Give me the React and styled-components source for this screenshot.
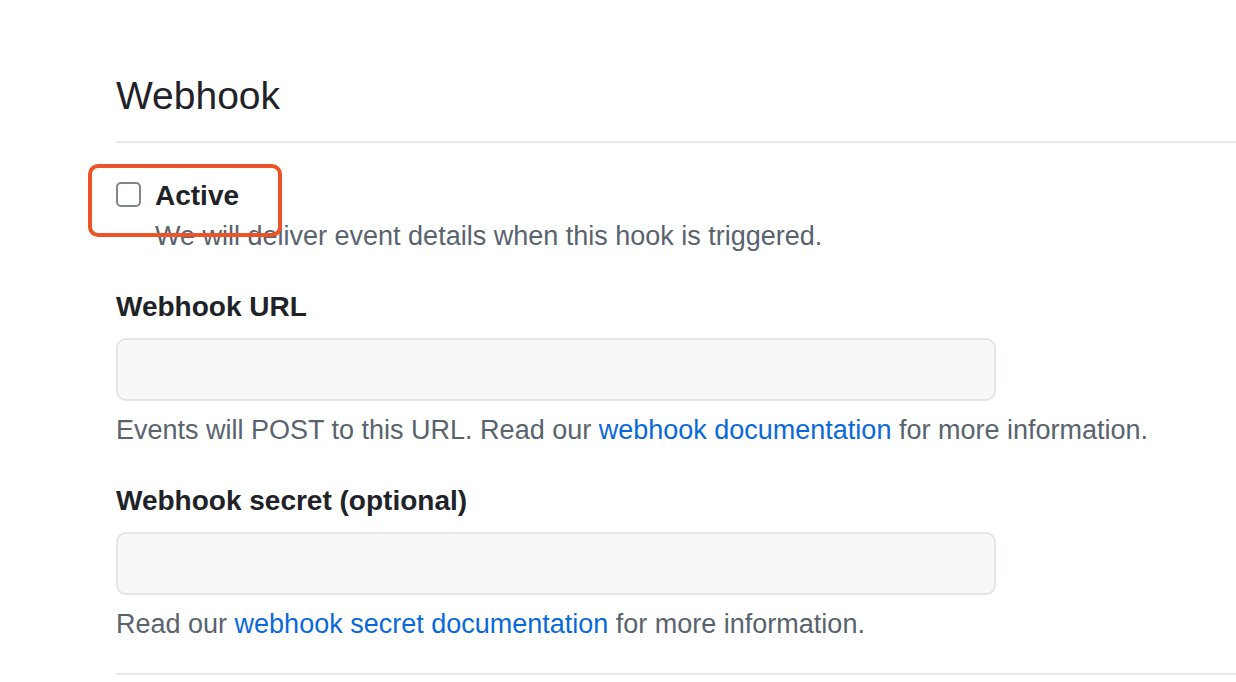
import React from 'react';
import styled, { createGlobalStyle } from 'styled-components';

const GlobalStyle = createGlobalStyle`
  body {
    margin: 0;
    background: #ffffff;
    font-family: "Liberation Sans", Arial, sans-serif;
    color: #1f2328;
  }
`;

const Page = styled.div`
  padding: 72px 0 0 116px;
`;

const Subhead = styled.div`
  padding-bottom: 21px;
  border-bottom: 2px solid #e8e9ee;
`;

const Heading = styled.h2`
  margin: 0;
  font-size: 39px;
  line-height: 48px;
  font-weight: 400;
  color: #1f2328;
`;

const CheckRow = styled.div`
  position: relative;
  display: flex;
  align-items: flex-start;
  gap: 14px;
  margin-top: 35px;
`;

const Box = styled.span`
  flex: none;
  width: 25px;
  height: 25px;
  margin-top: 4px;
  box-sizing: border-box;
  border: 2px solid #7d8590;
  border-radius: 5px;
  background: #ffffff;
`;

const CheckText = styled.div`
  display: flex;
  flex-direction: column;
  gap: 4px;
`;

const Label = styled.label`
  display: block;
  font-size: 28px;
  line-height: 36px;
  font-weight: 700;
  color: #1f2328;
`;

const Note = styled.p`
  margin: 0;
  font-size: 27px;
  line-height: 36px;
  color: #59636e;
`;

const Link = styled.a`
  color: #0969da;
  text-decoration: none;
`;

const Annotation = styled.span`
  position: absolute;
  left: -28px;
  top: -14px;
  width: 194px;
  height: 73px;
  box-sizing: border-box;
  border: 4px solid #ec5327;
  border-radius: 10px;
  pointer-events: none;
`;

const Field = styled.div`
  margin-top: ${p => p.$top}px;
  display: flex;
  flex-direction: column;
`;

const Input = styled.input`
  width: 880px;
  height: 63px;
  margin: 13px 0 11px;
  box-sizing: border-box;
  border: 2px solid #e3e5e9;
  border-radius: 10px;
  background: #f6f8fa;
  font-size: 27px;
  outline: none;
`;

const Divider = styled.hr`
  margin: 31px 0 0;
  border: 0;
  border-top: 2px solid #e8e9ee;
`;

export default function App() {
  return (
    <Page>
      <GlobalStyle />
      <Subhead>
        <Heading>Webhook</Heading>
      </Subhead>
      <CheckRow>
        <Box />
        <CheckText>
          <Label>Active</Label>
          <Note>We will deliver event details when this hook is triggered.</Note>
        </CheckText>
        <Annotation />
      </CheckRow>
      <Field $top={35}>
        <Label>Webhook URL</Label>
        <Input type="text" />
        <Note>
          Events will POST to this URL. Read our <Link href="#">webhook documentation</Link> for more information.
        </Note>
      </Field>
      <Field $top={35}>
        <Label>Webhook secret (optional)</Label>
        <Input type="password" />
        <Note>
          Read our <Link href="#">webhook secret documentation</Link> for more information.
        </Note>
      </Field>
      <Divider />
    </Page>
  );
}
